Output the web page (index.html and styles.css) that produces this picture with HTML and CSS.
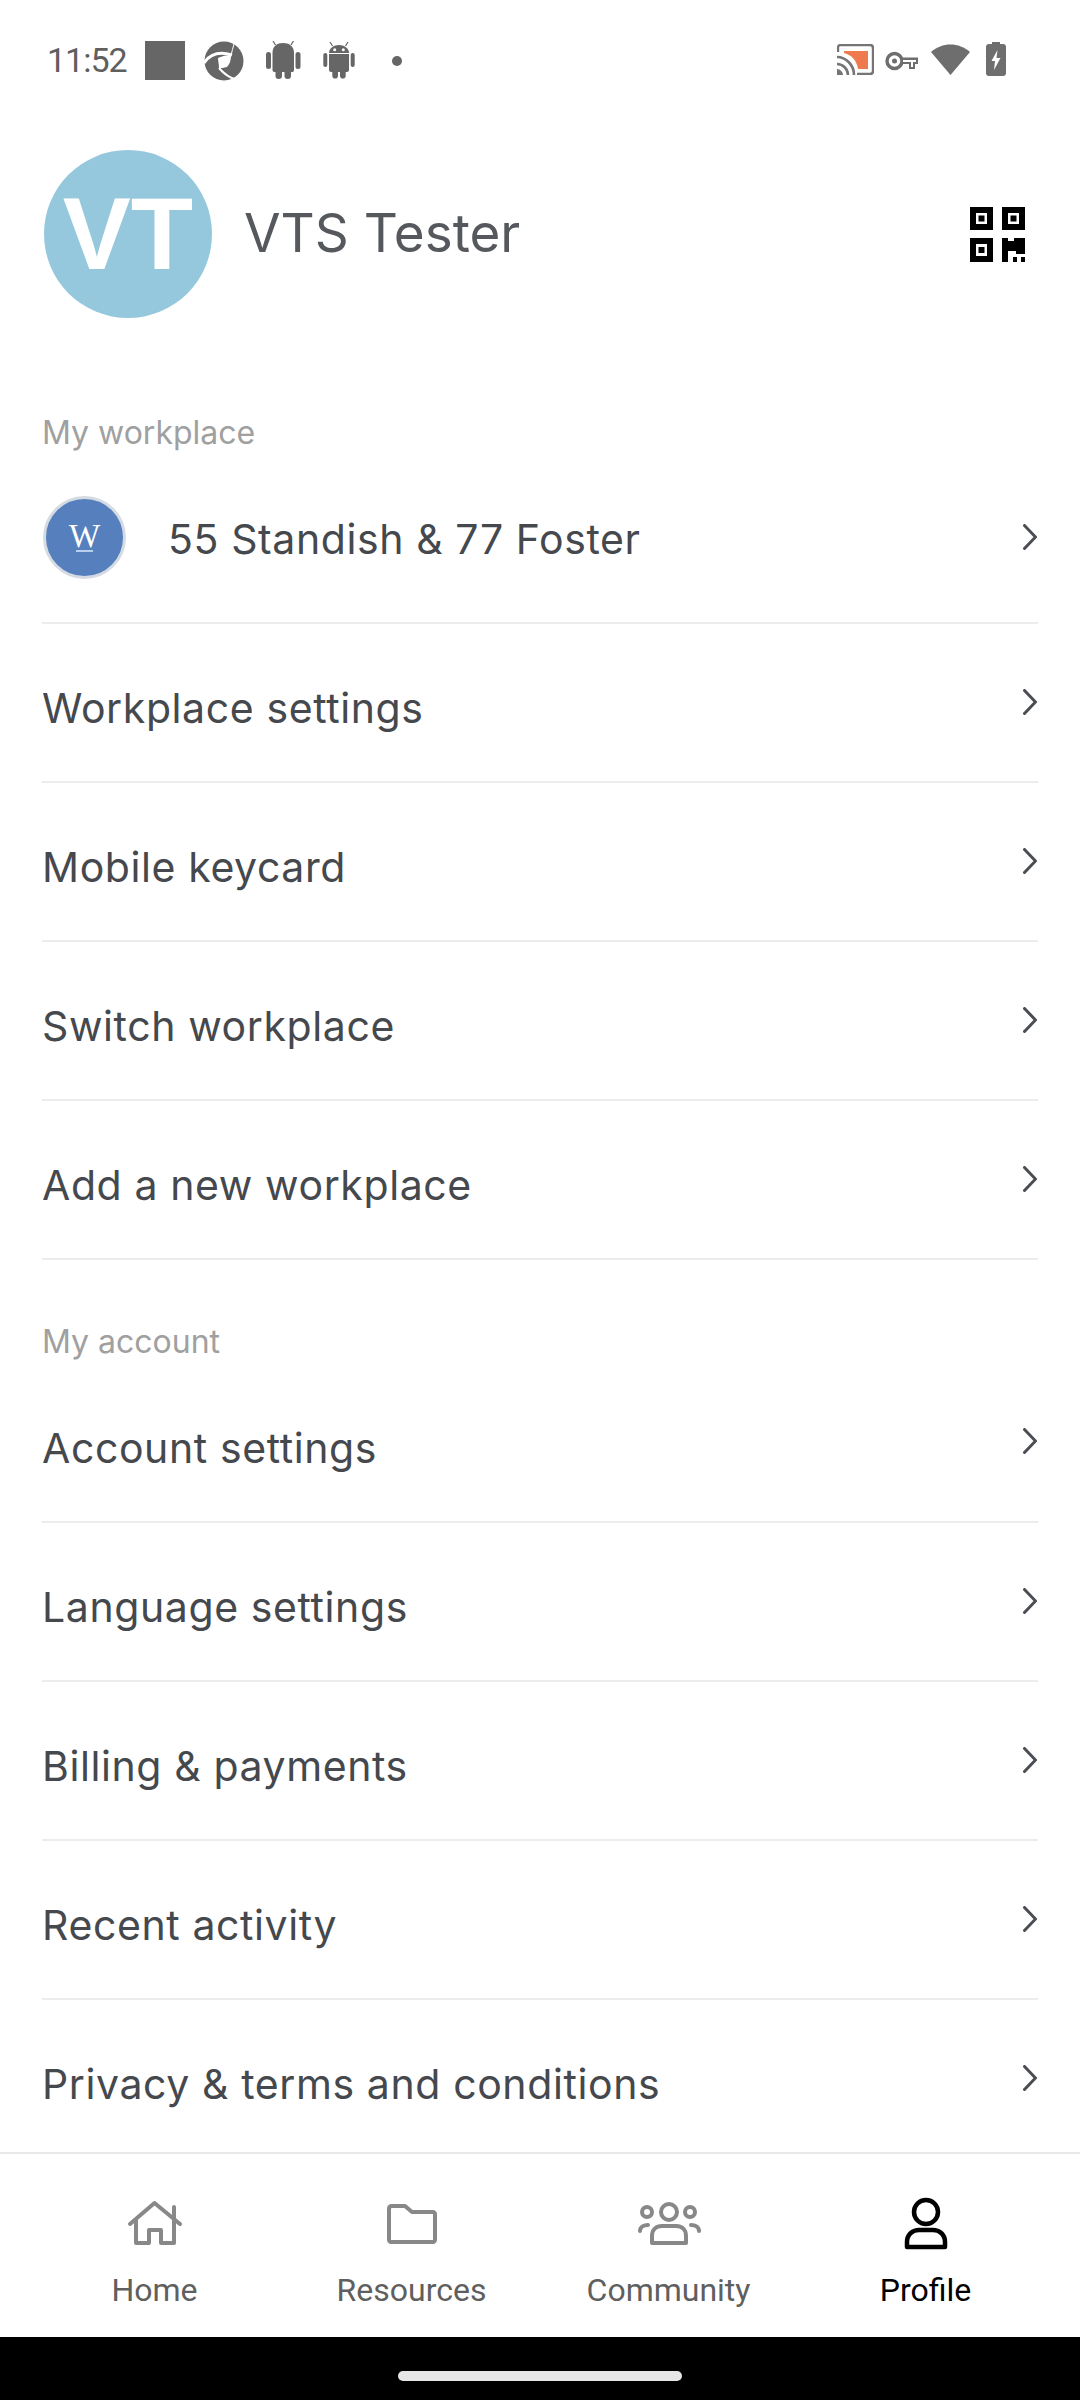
FILE: index.html
```html
<!DOCTYPE html>
<html lang="en">
<head>
    <meta charset="UTF-8">
    <title>Profile</title>
    <link rel="stylesheet" href="styles.css">
</head>
<body>
<div class="page">
    <div class="status-bar">
        <span class="time">11:52</span>
        <div class="status-left">
            <div class="status-square"></div>
            <svg class="status-icon" viewBox="0 0 40 40"><circle cx="20" cy="20" r="19.500" fill="#666"/><path d="M0 22C6 13 15 10 28 14" fill="none" stroke="#fff" stroke-width="3"/><path d="M14 17C18 15 23 14 27 14C27 19 26 23 23 26C20 27 17 27 15 27C15 23 14 20 14 17Z" fill="#fff"/><path d="M15 27C20 33 26 37 33 39" fill="none" stroke="#fff" stroke-width="2"/><path d="M30 3C29 7 28 10 27 14" fill="none" stroke="#fff" stroke-width="1"/></svg>
            <svg class="status-icon" viewBox="0 0 40 40"><g fill="#666"><rect x="3" y="11" width="5" height="17" rx="2.500"/><rect x="32.500" y="11" width="5" height="17" rx="2.500"/><path d="M9.500 12C9.500 5 14 2 20 2S31 5 31 12V29C31 30.500 30 31 29 31H12C10.500 31 9.500 30.500 9.500 29Z"/><rect x="12.500" y="27" width="6.500" height="11" rx="3.200"/><rect x="21.500" y="27" width="6.500" height="11" rx="3.200"/></g><path d="M12.500 4L10 0M28 4L30.500 0" stroke="#666" stroke-width="1.200"/></svg>
            <svg class="status-icon" viewBox="3 0 40 40"><g fill="#666"><rect x="4.300" y="12" width="4" height="14" rx="2"/><rect x="31.700" y="12" width="4" height="14" rx="2"/><path d="M10 12C10 7 15 4 20 4S30 7 30 12Z"/><path d="M10 13H30V29C30 30 29 31 28 31H12C11 31 10 30 10 29Z"/><rect x="13.300" y="28" width="5.700" height="9.500" rx="2.800"/><rect x="21" y="28" width="5.700" height="9.500" rx="2.800"/></g><path d="M13.500 5L11 1M26.500 5L29 1" stroke="#666" stroke-width="1.200"/><circle cx="15.700" cy="8.800" r="1.500" fill="#fff"/><circle cx="24.300" cy="8.800" r="1.500" fill="#fff"/></svg>
            <svg class="status-icon" viewBox="0 0 40 40"><circle cx="16" cy="20" r="5" fill="#666"/></svg>
        </div>
        <div class="status-right">
            <svg class="cast-icon" viewBox="0 0 37 31"><path d="M1 8V4C1 2 2 1 4 1H33C35 1 36 2 36 4V27C36 29 35 30 33 30H20" fill="none" stroke="#757575" stroke-width="2.400"/><path d="M7 7H31V25H21C20 17 15 11 7 9Z" fill="#ee7a4e"/><path d="M0 13C9 13 17 21 17 31M0 20C6 20 11 25 11 31" fill="none" stroke="#757575" stroke-width="2.600"/><path d="M0 25C3 25 6 28 6 31H0Z" fill="#757575"/></svg>
            <svg class="key-icon" viewBox="0 0 33 20"><circle cx="9.500" cy="10" r="7.500" fill="none" stroke="#6e6e6e" stroke-width="3.400"/><circle cx="9.500" cy="10" r="2.500" fill="#6e6e6e"/><path d="M17 6.500H33V13H30V18H24V13H17Z" fill="#6e6e6e"/><path d="M18 9H31V11H28V16H26V11H18Z" fill="#fff"/></svg>
            <svg class="wifi-icon" viewBox="0 0 39 33"><path d="M0 10C11 0 28 0 39 10L19.500 33Z" fill="#6e6e6e"/></svg>
            <svg class="battery-icon" viewBox="0 0 20 34"><path d="M6 0H14V2H17C19 2 20 3 20 5V31C20 33 19 34 17 34H3C1 34 0 33 0 31V5C0 3 1 2 3 2H6Z" fill="#6e6e6e"/><path d="M11.500 8L5.500 19H9L8 28L14.500 16H10.500Z" fill="#fff"/></svg>
        </div>
    </div>

    <div class="header">
        <div class="avatar">VT</div>
        <div class="name">VTS Tester</div>
        <svg class="qr" viewBox="0 0 55 55">
            <path fill-rule="evenodd" d="M0 0H23V23H0ZM6 6V17H17V6Z"/><rect x="8.500" y="8.500" width="6" height="6"/>
            <path fill-rule="evenodd" d="M32 0H55V23H32ZM38 6V17H49V6Z"/><rect x="40.500" y="8.500" width="6" height="6"/>
            <path fill-rule="evenodd" d="M0 31H23V55H0ZM6 37V49H17V37Z"/><rect x="8.500" y="40" width="6" height="6"/>
            <path d="M32 31H38V34H44V31H55V47H46V44H38V55H32Z"/><rect x="43" y="50" width="4" height="5"/><rect x="51" y="50" width="4" height="5"/>
        </svg>
    </div>

    <div class="list">
        <div class="section-label">My workplace</div>
        <div class="row row-workplace">
            <div class="logo"><span class="logo-w">W</span><span class="logo-line"></span></div>
            <span class="row-title">55 Standish &amp; 77 Foster</span>
            <svg class="chevron" viewBox="0 0 14 26"><path d="M1.500 1.500L12.500 13L1.500 24.500"/></svg>
        </div>
        <div class="row"><span class="row-label">Workplace settings</span><svg class="chevron" viewBox="0 0 14 26"><path d="M1.500 1.500L12.500 13L1.500 24.500"/></svg></div>
        <div class="row"><span class="row-label">Mobile keycard</span><svg class="chevron" viewBox="0 0 14 26"><path d="M1.500 1.500L12.500 13L1.500 24.500"/></svg></div>
        <div class="row"><span class="row-label">Switch workplace</span><svg class="chevron" viewBox="0 0 14 26"><path d="M1.500 1.500L12.500 13L1.500 24.500"/></svg></div>
        <div class="row"><span class="row-label">Add a new workplace</span><svg class="chevron" viewBox="0 0 14 26"><path d="M1.500 1.500L12.500 13L1.500 24.500"/></svg></div>

        <div class="section-label section-account">My account</div>
        <div class="row row-first"><span class="row-label">Account settings</span><svg class="chevron" viewBox="0 0 14 26"><path d="M1.500 1.500L12.500 13L1.500 24.500"/></svg></div>
        <div class="row"><span class="row-label">Language settings</span><svg class="chevron" viewBox="0 0 14 26"><path d="M1.500 1.500L12.500 13L1.500 24.500"/></svg></div>
        <div class="row"><span class="row-label">Billing &amp; payments</span><svg class="chevron" viewBox="0 0 14 26"><path d="M1.500 1.500L12.500 13L1.500 24.500"/></svg></div>
        <div class="row"><span class="row-label">Recent activity</span><svg class="chevron" viewBox="0 0 14 26"><path d="M1.500 1.500L12.500 13L1.500 24.500"/></svg></div>
        <div class="row"><span class="row-label">Privacy &amp; terms and conditions</span><svg class="chevron" viewBox="0 0 14 26"><path d="M1.500 1.500L12.500 13L1.500 24.500"/></svg></div>
    </div>

    <div class="tabs">
        <div class="tab">
            <svg class="tab-icon" viewBox="0 0 56 56"><path d="M3 29L27.500 8L53 29M9 24V48H22V35H34V48H47V24M47 12V24" fill="none" stroke="#888" stroke-width="4" stroke-linejoin="round" stroke-linecap="round"/></svg>
            <span>Home</span>
        </div>
        <div class="tab">
            <svg class="tab-icon" viewBox="0 0 56 56"><path d="M5 14C5 12 6 11 8 11H21L28 17H49C50 17 51 18 51 19V45C51 46 50 47 49 47H7C6 47 5 46 5 45Z" fill="none" stroke="#888" stroke-width="4" stroke-linejoin="round"/></svg>
            <span>Resources</span>
        </div>
        <div class="tab">
            <svg class="tab-icon" viewBox="4 6 68 56"><g fill="none" stroke="#888" stroke-width="4" stroke-linecap="round"><circle cx="38" cy="23" r="8"/><circle cx="16" cy="23" r="5"/><circle cx="59" cy="23" r="5"/><path d="M21 54V47C21 41 25 37 31 37H45C51 37 55 41 55 47V54Z" stroke-linejoin="round"/><path d="M9 42C9 38 13 36 17 36M68 42C68 38 64 36 60 36"/></g></svg>
            <span>Community</span>
        </div>
        <div class="tab tab-active">
            <svg class="tab-icon" viewBox="0 0 56 56"><g fill="none" stroke="#000" stroke-width="4.500" stroke-linejoin="round"><circle cx="28" cy="17" r="12"/><path d="M9 52V47C9 39 15 35 21 35H35C41 35 47 39 47 47V52Z"/></g></svg>
            <span>Profile</span>
        </div>
    </div>

    <div class="gesture-bar"><div class="gesture-pill"></div></div>
</div>
</body>
</html>
```

FILE: styles.css
```css
* {
    box-sizing: border-box;
}

html, body {
    margin: 0;
    padding: 0;
    background-color: #fff;
}

.page {
    width: 1080px;
    height: 2400px;
    display: flex;
    flex-direction: column;
    overflow: hidden;
    font-family: Inter, "Liberation Sans", sans-serif;
    color: #45484d;
}

/* status bar */
.status-bar {
    height: 120px;
    flex-shrink: 0;
    display: flex;
    align-items: flex-start;
    padding: 40px 0 0 47px;
}

.time {
    font-family: Roboto, sans-serif;
    font-size: 34px;
    letter-spacing: -1px;
    line-height: 40px;
    color: #5f5f5f;
    width: 98px;
}

.status-left {
    display: flex;
    gap: 19px;
    padding-top: 1px;
}

.status-square {
    width: 40px;
    height: 39px;
    background-color: #666;
}

.status-icon {
    width: 40px;
    height: 40px;
}

.status-right {
    margin-left: auto;
    margin-right: 74px;
    display: flex;
    align-items: flex-start;
    padding-top: 1px;
}

.cast-icon {
    width: 37px;
    height: 31px;
    margin: 3px 11px 0 0;
}

.key-icon {
    width: 33px;
    height: 20px;
    margin: 10px 13px 0 0;
}

.wifi-icon {
    width: 39px;
    height: 33px;
    margin: 1px 16px 0 0;
}

.battery-icon {
    width: 20px;
    height: 34px;
    margin-top: 1px;
}

/* header */
.header {
    flex-shrink: 0;
    display: flex;
    align-items: center;
    padding: 30px 55px 0 44px;
}

.avatar {
    width: 168px;
    height: 168px;
    border-radius: 50%;
    background-color: #95c8dd;
    color: #fff;
    font-family: "Liberation Sans", sans-serif;
    font-weight: bold;
    font-size: 102px;
    display: flex;
    align-items: center;
    justify-content: center;
}

.name {
    margin: 0 0 2px 32px;
    font-size: 53px;
    color: #55585c;
}

.qr {
    margin-left: auto;
    width: 55px;
    height: 55px;
}

/* list */
.list {
    flex: 1;
    min-height: 0;
    overflow: hidden;
    padding: 0 42px;
}

.section-label {
    margin-top: 95px;
    font-size: 32px;
    line-height: 40px;
    color: #a0a0a0;
}

.section-account {
    margin-top: 62px;
}

.row {
    height: 159px;
    display: flex;
    align-items: center;
    justify-content: space-between;
    border-bottom: 2px solid #ececec;
}

.row-first {
    height: 161px;
}

.row-first .row-label {
    margin-top: 12px;
}

.row-workplace {
    height: 171px;
}

.row-label {
    margin-top: 10px;
    font-size: 41px;
    letter-spacing: 0.6px;
}

.row-title {
    flex: 1;
    margin: 2px 0 0 42px;
    font-size: 41px;
    letter-spacing: 0.6px;
}

.chevron {
    width: 14px;
    height: 26px;
    margin: 0 1px 2px 0;
    fill: none;
    stroke: #4a4d52;
    stroke-width: 3;
    stroke-linecap: round;
    stroke-linejoin: miter;
}

.logo {
    width: 83px;
    height: 83px;
    margin-left: 1px;
    border-radius: 50%;
    background-color: #5580bd;
    border: 3px solid #d5dbe3;
    display: flex;
    flex-direction: column;
    align-items: center;
    justify-content: center;
    color: #fff;
}

.logo-w {
    font-family: "Liberation Serif", serif;
    font-size: 33px;
    line-height: 24px;
}

.logo-line {
    width: 17px;
    height: 2px;
    margin-top: 2px;
    background-color: #b9d0ec;
}

/* bottom tabs */
.tabs {
    flex-shrink: 0;
    height: 185px;
    display: grid;
    grid-template-columns: repeat(4, 1fr);
    padding: 41px 26px 0;
    border-top: 2px solid #e8e8e8;
    background-color: #fff;
}

.tab {
    display: flex;
    flex-direction: column;
    align-items: center;
    font-family: Roboto, sans-serif;
    font-size: 32px;
    line-height: 40px;
    color: #5f5f5f;
}

.tab-icon {
    height: 56px;
    margin-bottom: 19px;
}

.tab-active {
    color: #000;
}

.gesture-bar {
    flex-shrink: 0;
    height: 63px;
    background-color: #000;
    display: flex;
    justify-content: center;
    padding-top: 34px;
}

.gesture-pill {
    width: 284px;
    height: 10px;
    border-radius: 5px;
    background-color: #e6e6e6;
}
```
